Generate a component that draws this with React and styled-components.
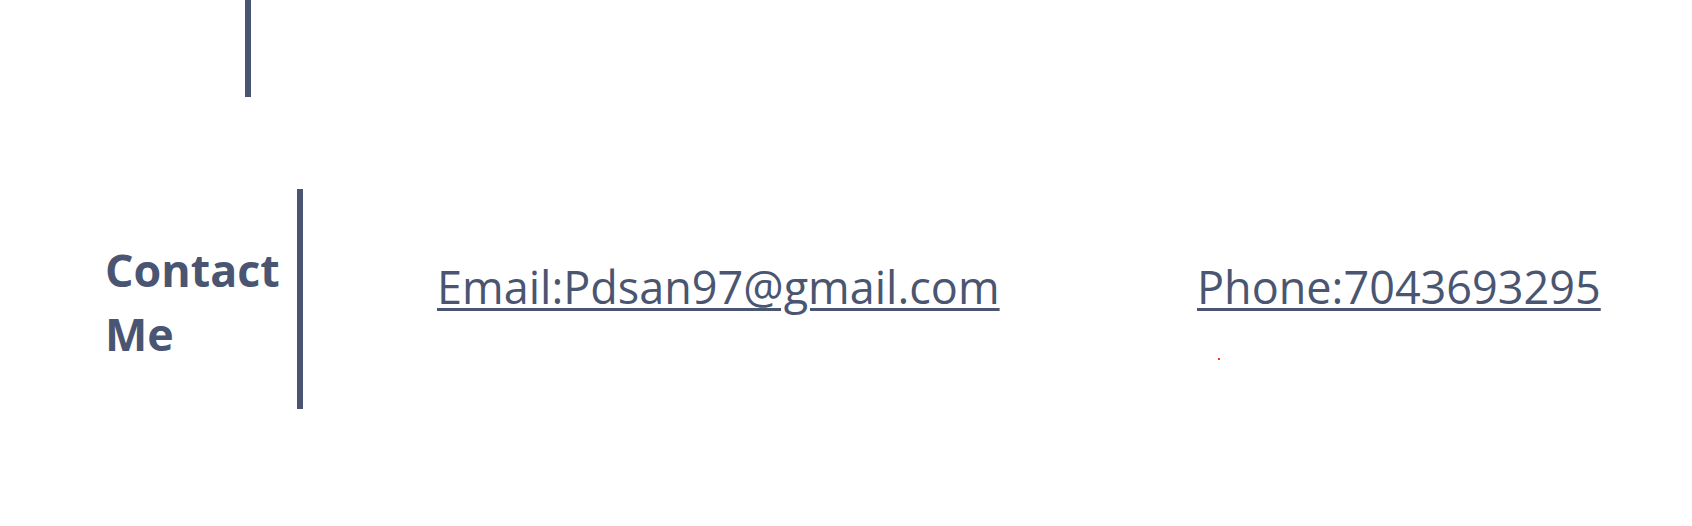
import React from "react"
import styled, { createGlobalStyle } from "styled-components"

const GlobalStyle = createGlobalStyle`
  body {
    margin: 0;
    background: #ffffff;
    font-family: "Open Sans", "Noto Sans", sans-serif;
    color: #4a5671;
  }
`

const Page = styled.div`
  display: flex;
  flex-direction: column;
  gap: 92px;
  padding-left: 105px;
`

const SectionRow = styled.section`
  display: flex;
  align-items: center;
`

const SectionTitle = styled.h2`
  width: ${props => props.width}px;
  margin: 0;
  padding: 6px 20px 0 0;
  box-sizing: border-box;
  font-size: 44.8px;
  line-height: 64px;
  font-weight: 700;
  color: #4a5671;
`

const SectionBody = styled.div`
  height: ${props => props.height}px;
  border-left: 6px solid #4a5671;
  box-sizing: border-box;
  display: grid;
  grid-template-columns: 760px auto;
  align-content: start;
  padding: 67px 0 0 134px;
`

const ContactCell = styled.div`
  display: flex;
  flex-direction: column;
  align-items: flex-start;
`

const ContactLink = styled.a`
  font-size: 45px;
  font-weight: 400;
  color: #4a5671;
  text-decoration: underline;
  text-decoration-thickness: 3px;
  text-underline-offset: 4px;
`

const Speck = styled.span`
  width: 2px;
  height: 2px;
  margin: 41px 0 0 21px;
  background: #ff2a2a;
`

export default function App() {
  return (
    <>
      <GlobalStyle />
      <Page>
        <SectionRow>
          <SectionTitle width={140} />
          <SectionBody height={97} />
        </SectionRow>
        <SectionRow>
          <SectionTitle width={192}>Contact Me</SectionTitle>
          <SectionBody height={220}>
            <ContactCell>
              <ContactLink href="mailto:Pdsan97@gmail.com">Email:Pdsan97@gmail.com</ContactLink>
            </ContactCell>
            <ContactCell>
              <ContactLink href="tel:7043693295">Phone:7043693295</ContactLink>
              <Speck />
            </ContactCell>
          </SectionBody>
        </SectionRow>
      </Page>
    </>
  )
}
